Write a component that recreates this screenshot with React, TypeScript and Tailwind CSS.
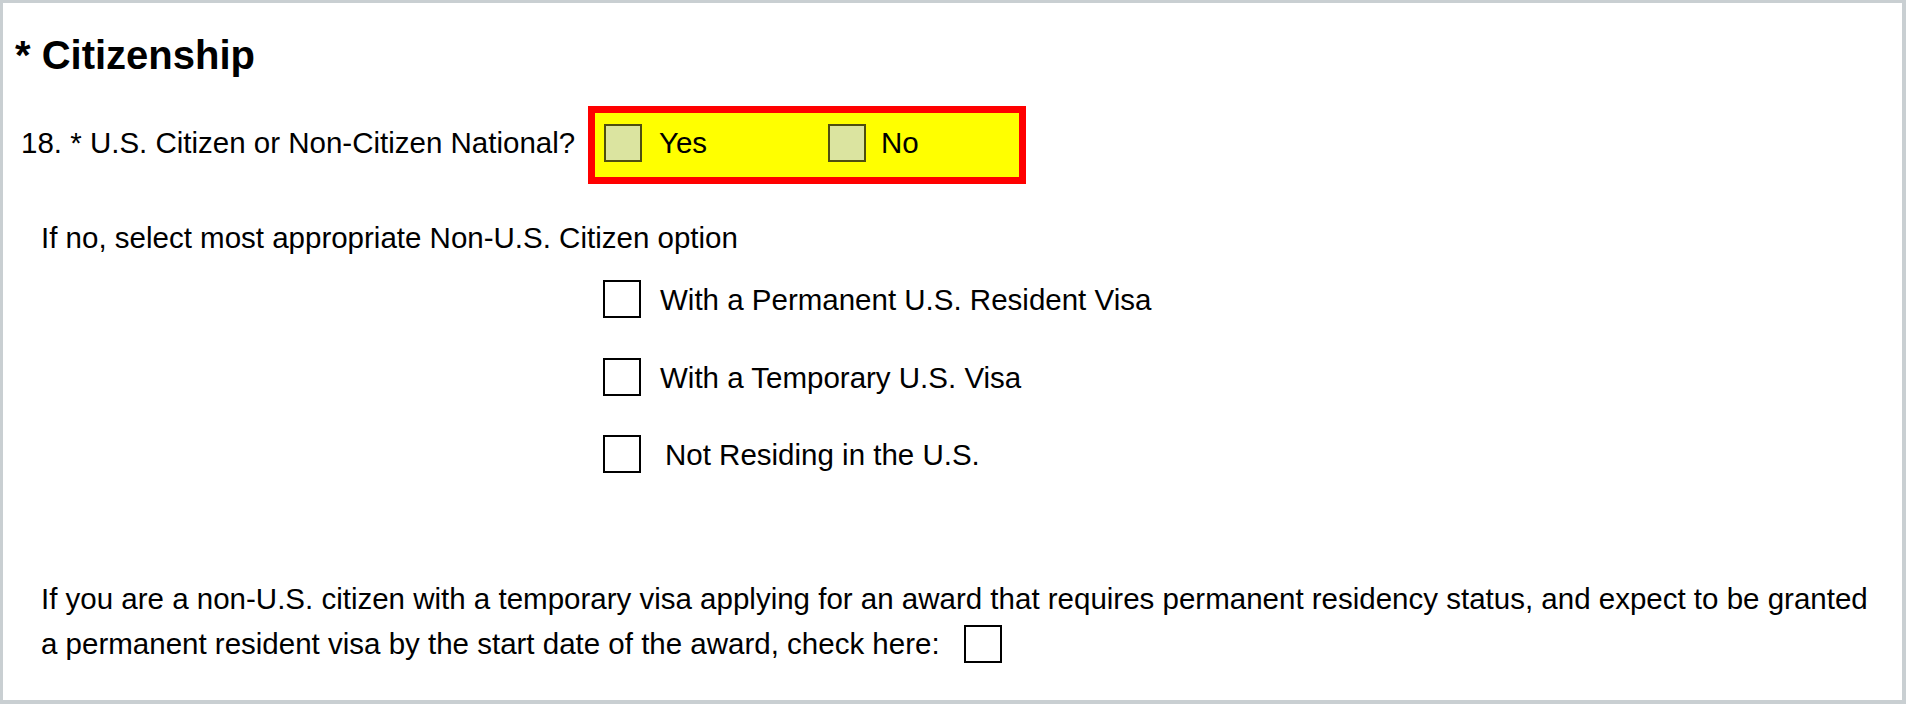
const font = { fontFamily: '"Liberation Sans", Arial, sans-serif' }

function Box({ tinted = false }: { tinted?: boolean }) {
  return (
    <span
      className={`block w-[38px] h-[38px] shrink-0 border-2 ${
        tinted ? 'border-[#4f4f10] bg-[#dbe4a0]' : 'border-black bg-white'
      }`}
    />
  )
}

const OPTIONS = [
  { label: 'With a Permanent U.S. Resident Visa', gap: 'ml-[19px]', mt: 'mt-[28px]' },
  { label: 'With a Temporary U.S. Visa', gap: 'ml-[19px]', mt: 'mt-[40px]' },
  { label: 'Not Residing in the U.S.', gap: 'ml-[24px]', mt: 'mt-[39px]' },
]

export default function App() {
  return (
    <div
      style={font}
      className="w-[1906px] h-[704px] bg-white text-black border-t-[3px] border-l-[3px] border-r-[4px] border-b-[4px] border-[#c9cfd2] overflow-hidden"
    >
      {/* Heading */}
      <h1 className="mt-[32px] ml-[12px] text-[40px] leading-[40px] font-bold">* Citizenship</h1>

      {/* Question 18 */}
      <div className="flex items-start mt-[31px]">
        <span className="ml-[18px] mt-[22px] text-[29.5px] leading-[29px] w-[567px]">
          18. * U.S. Citizen or Non-Citizen National?
        </span>
        <div className="flex items-start w-[438px] h-[78px] border-[7px] border-[#ff0000] bg-[#ffff00] pl-[9px]">
          <div className="flex items-start w-[224px]">
            <span className="mt-[11px]">
              <Box tinted />
            </span>
            <span className="ml-[17px] mt-[15px] text-[29.5px] leading-[29px]">Yes</span>
          </div>
          <div className="flex items-start">
            <span className="mt-[11px]">
              <Box tinted />
            </span>
            <span className="ml-[15px] mt-[15px] text-[29.5px] leading-[29px]">No</span>
          </div>
        </div>
      </div>

      {/* Non-citizen options */}
      <p className="ml-[38px] mt-[39px] text-[29.5px] leading-[29px]">
        If no, select most appropriate Non-U.S. Citizen option
      </p>
      <div className="flex flex-col ml-[600px]">
        {OPTIONS.map((o) => (
          <div key={o.label} className={`flex items-center h-[38px] ${o.mt}`}>
            <Box />
            <span className={`${o.gap} text-[29.5px] leading-[29px]`}>{o.label}</span>
          </div>
        ))}
      </div>

      {/* Permanent residency note */}
      <div className="ml-[38px] mt-[103px] text-[29.5px]">
        <p className="leading-[45px] h-[45px] whitespace-nowrap">
          If you are a non-U.S. citizen with a temporary visa applying for an award that requires permanent residency status, and expect to be granted
        </p>
        <div className="flex items-center h-[45px]">
          <span className="leading-[45px]">a permanent resident visa by the start date of the award, check here:</span>
          <span className="ml-[24px]">
            <Box />
          </span>
        </div>
      </div>
    </div>
  )
}
